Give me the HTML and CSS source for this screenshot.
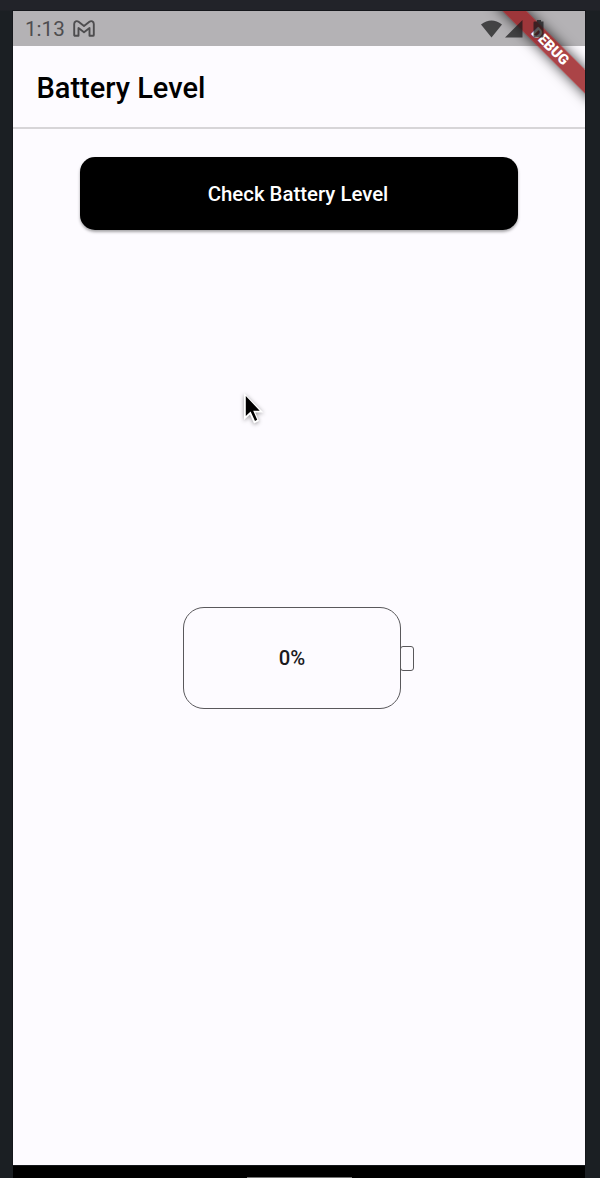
FILE: index.html
```html
<!DOCTYPE html>
<html lang="en">
<head>
<meta charset="utf-8">
<title>Battery Level</title>
<link rel="stylesheet" href="styles.css">
</head>
<body>
<div class="device">
  <div class="screen">
    <div class="statusbar">
      <span class="clock">1:13</span>
      <svg class="mail" width="22" height="18" viewBox="0 0 22 18"><path d="M1.200 4C1.200 1.200 3.800.4 5.600 1.800L11 6l5.400-4.200C18.200.4 20.800 1.200 20.800 4V14.900Q20.800 15.800 19.900 15.800H16.500V8L11 12.200 5.500 8v7.800H2.100Q1.200 15.800 1.200 14.900Z"/></svg>
      <svg class="signals" width="70" height="22" viewBox="0 0 70 22"><path d="M1 5.500Q11.500-2.500 22 5.500L11.500 18.500ZM42.500 1v17.500H25Z"/><path d="M54.500 2.500h2.500V1h4v1.500h2.500V17.500q0 1-1 1h-8q-1 0-1-1V3.500q0-1 1-1Z"/></svg>
    </div>
    <header class="appbar"><h1>Battery Level</h1></header>
    <main class="content">
      <button class="check">Check Battery Level</button>
      <div class="battery">
        <div class="cell">0%</div>
        <div class="terminal"></div>
      </div>
    </main>
    <div class="banner"><span>DEBUG</span></div>
  </div>
  <div class="navbar"><div class="handle"></div></div>
</div>
<svg class="cursor" width="30" height="38" viewBox="0 0 30 38"><path d="M4 2V29L10 23.500 14 32.500 19 30 15.300 21.500H23.500Z" fill="#fff"/><path d="M5.800 5V25L10.600 20.500 15 30 17.200 28.800 13.200 19.700H19.700Z"/></svg>
</body>
</html>
```
FILE: styles.css
```css
body {
  margin: 0;
  height: 1178px;
  overflow: hidden;
  background: linear-gradient(#222329 0, #222329 10px, #1b1f23 11px);
  font-family: Roboto, sans-serif;
}
.device {
  display: flex;
  flex-direction: column;
  box-sizing: border-box;
  width: 572px;
  height: 1178px;
  margin-left: 13px;
  padding-top: 11px;
}
.screen {
  position: relative;
  display: flex;
  flex-direction: column;
  width: 572px;
  flex: 1;
  overflow: hidden;
  background: #fdfbff;
  box-shadow: 0 0 0 1px #15171b;
}
.statusbar {
  display: flex;
  height: 35px;
  background: #b4b2b5;
}
.clock {
  margin-left: 12px;
  width: 48px;
  line-height: 37px;
  font-size: 20.600px;
  color: #4e4d4f;
}
.mail {
  margin-top: 9px;
  fill: none;
  stroke: #4e4d4f;
  stroke-width: 1.9;
  stroke-linejoin: round;
}
.signals {
  position: relative;
  z-index: 2;
  margin: 8px 0 0 385px;
  fill: rgba(24, 23, 25, .72);
}
.appbar {
  display: flex;
  align-items: center;
  box-sizing: border-box;
  height: 83px;
  padding-left: 23.500px;
  border-bottom: 2px solid #d7d5d8;
}
.appbar h1 {
  margin: 0;
  padding-top: 2px;
  font-size: 29px;
  line-height: 34px;
  font-weight: 500;
  color: #000;
}
.content {
  display: flex;
  flex-direction: column;
  align-items: center;
  padding-top: 28px;
}
.check {
  width: 438px;
  height: 73px;
  padding: 1px 2px 0 0;
  border: 0;
  border-radius: 15px;
  background: #000;
  color: #fff;
  font: 500 20.400px Roboto, sans-serif;
  box-shadow: 0 2px 3px rgba(0, 0, 0, .35);
}
.battery {
  display: flex;
  align-items: center;
  margin: 377px 1px 0 0;
}
.cell {
  box-sizing: border-box;
  width: 218px;
  height: 102px;
  border: 1px solid #59585b;
  border-radius: 21px;
  text-align: center;
  line-height: 101px;
  font-size: 20.300px;
  font-weight: 500;
  color: #1b1a1d;
}
.terminal {
  box-sizing: border-box;
  width: 14px;
  height: 25px;
  margin-left: -1px;
  border: 1px solid #59585b;
  border-radius: 3px;
}
/* Corner ribbon, centred on the diagonal of the top-right corner */
.banner {
  position: absolute;
  top: 26.500px;
  left: 467px;
  width: 140px;
  height: 17px;
  transform: rotate(45deg);
  background: rgba(153, 27, 31, .82);
  box-shadow: 0 0 13px rgba(0, 0, 0, .75);
  color: #fff;
  font-size: 14.400px;
  line-height: 17px;
  font-weight: 900;
  text-align: center;
}
.navbar {
  display: flex;
  justify-content: center;
  align-items: flex-end;
  box-sizing: border-box;
  height: 13px;
  border-top: 1px solid #bdbcbe;
  background: #000;
}
.handle {
  width: 105px;
  height: 1px;
  background: #777;
}
.cursor {
  position: absolute;
  left: 239.500px;
  top: 390.500px;
  filter: drop-shadow(0 1px 2px rgba(0, 0, 0, .4));
}
```
